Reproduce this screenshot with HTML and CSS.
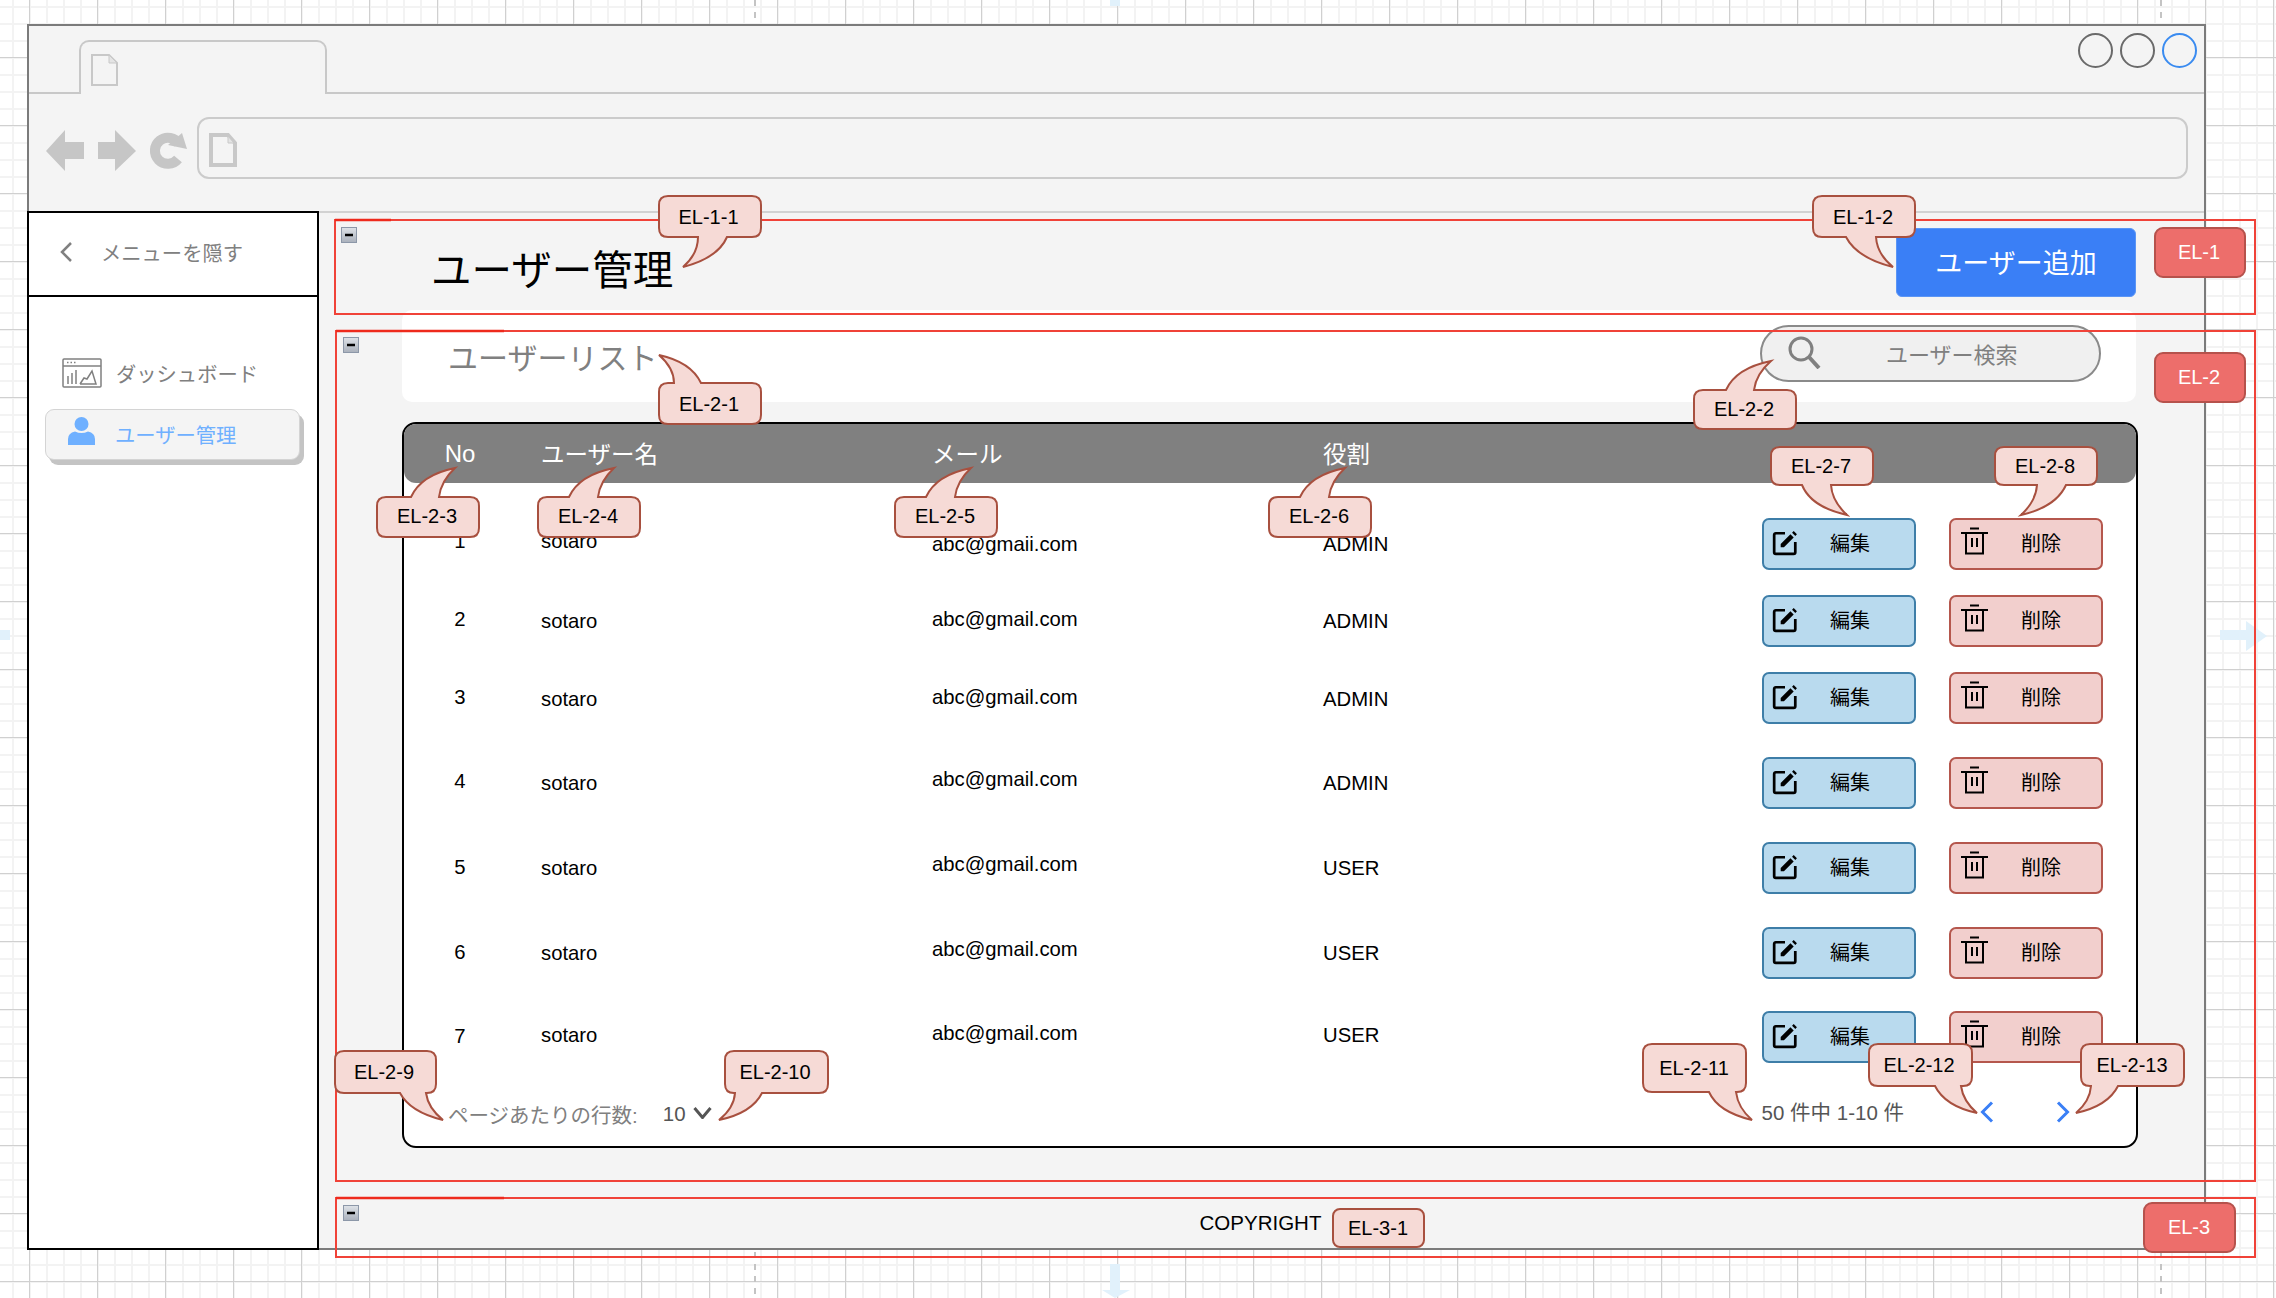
FILE: index.html
```html
<!DOCTYPE html>
<html lang="ja">
<head>
<meta charset="utf-8">
<title>ユーザー管理</title>
<link rel="stylesheet" href="styles.css">
</head>
<body>
<svg class="canvas-marks" viewBox="0 0 2276 1298" aria-hidden="true">
  <g class="dash"><path d="M755 0V22M2161 0V22M755 1252V1298M2161 1252V1298"/></g>
  <g class="guide">
    <path d="M2220 630H2246V621L2267 636L2246 651V640H2220Z"/>
    <path d="M0 630H10V640H0Z"/>
    <path d="M1110 1264H1120V1290H1130L1115 1298L1102 1290H1110Z"/>
    <path d="M1110 0H1120V6H1110Z"/>
  </g>
</svg>

<div class="window">
  <div class="tabstrip">
    <div class="tab">
      <svg class="doc-tab" viewBox="0 0 27 32"><path class="doc-line" d="M1 1H18L26 9V31H1Z"/><path class="doc-fold" d="M18 1V9H26Z"/></svg>
    </div>
    <div class="win-buttons">
      <span class="win-dot"></span><span class="win-dot"></span><span class="win-dot active"></span>
    </div>
  </div>
  <div class="toolbar">
    <svg class="nav-icons" viewBox="0 0 142 42">
      <polygon points="0,21 19,0 19,12 38,12 38,29 19,29 19,41"/>
      <polygon points="52,12 69,12 69,0 90,21 69,41 69,29 52,29"/>
      <path class="reload" d="M133 14A13 13 0 1 0 132 29"/>
      <polygon points="122,15 136,3 141,19"/>
    </svg>
    <div class="address">
      <svg class="doc-addr" viewBox="0 0 28 34"><path class="doc-line thick" d="M2 2H19L26 10V32H2Z"/><path class="doc-fold" d="M19 3V10H25Z"/></svg>
    </div>
  </div>
  <div class="app">
    <aside class="sidebar">
      <div class="side-head">
        <svg class="side-chevron" viewBox="0 0 14 22"><path d="M12 2L3 11L12 20"/></svg>
        <span>メニューを隠す</span>
      </div>
      <nav class="side-nav">
        <div class="side-item">
          <svg class="dash-icon" viewBox="0 0 40 30">
            <rect x="1" y="1" width="38" height="28" rx="1"/>
            <path d="M1 8H39"/>
            <path class="dots" d="M5 4.500H6.500M8.500 4.500H10M12 4.500H13.500"/>
            <path d="M6 26V18M10 26V15M14 26V12"/>
            <path d="M18 26L22 20L25 21L30 13L34 26H18"/>
          </svg>
          <span>ダッシュボード</span>
        </div>
        <div class="side-item current">
          <svg class="user-icon" viewBox="0 0 27 28"><circle cx="13.500" cy="7" r="7"/><path d="M0 28V22Q0 16 7 14.500Q13.500 17.500 20 14.500Q27 16 27 22V28Z"/></svg>
          <span>ユーザー管理</span>
        </div>
      </nav>
    </aside>

    <main class="main">
      <header class="page-head">
        <h1 class="page-title">ユーザー管理</h1>
        <button class="add-btn">ユーザー追加</button>
      </header>

      <section class="list-head">
        <h2 class="list-title">ユーザーリスト</h2>
        <div class="search">
          <svg class="search-icon" viewBox="0 0 34 33"><circle cx="14" cy="13" r="11"/><path d="M22 21L32 32"/></svg>
          <span>ユーザー検索</span>
        </div>
      </section>

      <section class="card">
        <div class="thead">
          <span class="col-no">No</span><span>ユーザー名</span><span>メール</span><span>役割</span>
        </div>
        <div class="rows">
          <div class="row">
            <span class="col-no up3">1</span><span class="up3">sotaro</span><span>abc@gmaii.com</span><span>ADMIN</span>
            <button class="btn edit"><svg class="i-edit" viewBox="0 0 24 24"><path d="M12 3H3.500A1.500 1.500 0 0 0 2 4.500V20.500A1.500 1.500 0 0 0 3.500 22H20A1.500 1.500 0 0 0 21.500 20.500V11"/><path class="fill" d="M8 13L17 4L20 7L11 16H8Z"/><path class="fill" d="M18.500 2.500L20 1L23 4L21.500 5.500Z"/></svg><span>編集</span></button>
            <button class="btn del"><svg class="i-del" viewBox="0 0 27 28"><path d="M0 6H27M9 1.500H18M5 6V26.500H22V6M11 11V20M16 11V20"/></svg><span>削除</span></button>
          </div>
          <div class="row">
            <span class="col-no up2">2</span><span>sotaro</span><span class="up2">abc@gmail.com</span><span>ADMIN</span>
            <button class="btn edit"><svg class="i-edit" viewBox="0 0 24 24"><path d="M12 3H3.500A1.500 1.500 0 0 0 2 4.500V20.500A1.500 1.500 0 0 0 3.500 22H20A1.500 1.500 0 0 0 21.500 20.500V11"/><path class="fill" d="M8 13L17 4L20 7L11 16H8Z"/><path class="fill" d="M18.500 2.500L20 1L23 4L21.500 5.500Z"/></svg><span>編集</span></button>
            <button class="btn del"><svg class="i-del" viewBox="0 0 27 28"><path d="M0 6H27M9 1.500H18M5 6V26.500H22V6M11 11V20M16 11V20"/></svg><span>削除</span></button>
          </div>
          <div class="row wide">
            <span class="col-no up1">3</span><span class="dn1">sotaro</span><span class="up1">abc@gmail.com</span><span class="dn1">ADMIN</span>
            <button class="btn edit"><svg class="i-edit" viewBox="0 0 24 24"><path d="M12 3H3.500A1.500 1.500 0 0 0 2 4.500V20.500A1.500 1.500 0 0 0 3.500 22H20A1.500 1.500 0 0 0 21.500 20.500V11"/><path class="fill" d="M8 13L17 4L20 7L11 16H8Z"/><path class="fill" d="M18.500 2.500L20 1L23 4L21.500 5.500Z"/></svg><span>編集</span></button>
            <button class="btn del"><svg class="i-del" viewBox="0 0 27 28"><path d="M0 6H27M9 1.500H18M5 6V26.500H22V6M11 11V20M16 11V20"/></svg><span>削除</span></button>
          </div>
          <div class="row wide">
            <span class="col-no up2">4</span><span>sotaro</span><span class="up4">abc@gmail.com</span><span>ADMIN</span>
            <button class="btn edit"><svg class="i-edit" viewBox="0 0 24 24"><path d="M12 3H3.500A1.500 1.500 0 0 0 2 4.500V20.500A1.500 1.500 0 0 0 3.500 22H20A1.500 1.500 0 0 0 21.500 20.500V11"/><path class="fill" d="M8 13L17 4L20 7L11 16H8Z"/><path class="fill" d="M18.500 2.500L20 1L23 4L21.500 5.500Z"/></svg><span>編集</span></button>
            <button class="btn del"><svg class="i-del" viewBox="0 0 27 28"><path d="M0 6H27M9 1.500H18M5 6V26.500H22V6M11 11V20M16 11V20"/></svg><span>削除</span></button>
          </div>
          <div class="row wide">
            <span class="col-no up1">5</span><span>sotaro</span><span class="up4">abc@gmail.com</span><span>USER</span>
            <button class="btn edit"><svg class="i-edit" viewBox="0 0 24 24"><path d="M12 3H3.500A1.500 1.500 0 0 0 2 4.500V20.500A1.500 1.500 0 0 0 3.500 22H20A1.500 1.500 0 0 0 21.500 20.500V11"/><path class="fill" d="M8 13L17 4L20 7L11 16H8Z"/><path class="fill" d="M18.500 2.500L20 1L23 4L21.500 5.500Z"/></svg><span>編集</span></button>
            <button class="btn del"><svg class="i-del" viewBox="0 0 27 28"><path d="M0 6H27M9 1.500H18M5 6V26.500H22V6M11 11V20M16 11V20"/></svg><span>削除</span></button>
          </div>
          <div class="row tail">
            <span class="col-no up1">6</span><span>sotaro</span><span class="up4">abc@gmail.com</span><span>USER</span>
            <button class="btn edit"><svg class="i-edit" viewBox="0 0 24 24"><path d="M12 3H3.500A1.500 1.500 0 0 0 2 4.500V20.500A1.500 1.500 0 0 0 3.500 22H20A1.500 1.500 0 0 0 21.500 20.500V11"/><path class="fill" d="M8 13L17 4L20 7L11 16H8Z"/><path class="fill" d="M18.500 2.500L20 1L23 4L21.500 5.500Z"/></svg><span>編集</span></button>
            <button class="btn del"><svg class="i-del" viewBox="0 0 27 28"><path d="M0 6H27M9 1.500H18M5 6V26.500H22V6M11 11V20M16 11V20"/></svg><span>削除</span></button>
          </div>
          <div class="row tail">
            <span class="col-no up1">7</span><span class="up2">sotaro</span><span class="up4">abc@gmail.com</span><span class="up2">USER</span>
            <button class="btn edit"><svg class="i-edit" viewBox="0 0 24 24"><path d="M12 3H3.500A1.500 1.500 0 0 0 2 4.500V20.500A1.500 1.500 0 0 0 3.500 22H20A1.500 1.500 0 0 0 21.500 20.500V11"/><path class="fill" d="M8 13L17 4L20 7L11 16H8Z"/><path class="fill" d="M18.500 2.500L20 1L23 4L21.500 5.500Z"/></svg><span>編集</span></button>
            <button class="btn del"><svg class="i-del" viewBox="0 0 27 28"><path d="M0 6H27M9 1.500H18M5 6V26.500H22V6M11 11V20M16 11V20"/></svg><span>削除</span></button>
          </div>
        </div>
        <div class="pager">
          <span class="per-page">ページあたりの行数:</span>
          <span class="per-value">10</span>
          <svg class="per-chevron" viewBox="0 0 19 12"><path d="M1.500 1L9.500 10.500L17.500 1"/></svg>
          <span class="range">50 件中 1-10 件</span>
          <svg class="page-chevron first" viewBox="0 0 14 22"><path d="M12 1.500L2.500 11L12 20.500"/></svg>
          <svg class="page-chevron" viewBox="0 0 14 22"><path d="M2 1.500L11.500 11L2 20.500"/></svg>
        </div>
      </section>

      <footer class="page-foot">COPYRIGHT</footer>
    </main>
  </div>
</div>

<svg class="annotations" viewBox="0 0 2276 1298">
  <defs>
    <linearGradient id="minus-fill" x1="0" y1="0" x2="0" y2="1">
      <stop offset="0" stop-color="#dfe3e8"/><stop offset="1" stop-color="#a9b0bb"/>
    </linearGradient>
  </defs>
  <g class="zones">
    <rect x="335" y="220" width="1920" height="94"/>
    <rect x="336" y="331" width="1919" height="850"/>
    <rect x="336" y="1198" width="1919" height="59"/>
    <path d="M335 220H391M336 331H504M336 1198H504"/>
  </g>
  <g class="minus">
    <rect x="341.500" y="227.500" width="15" height="15"/><path d="M345 235H353"/>
    <rect x="343.500" y="337.500" width="15" height="15"/><path d="M347 345H355"/>
    <rect x="343.500" y="1205.500" width="15" height="15"/><path d="M347 1213H355"/>
  </g>
  <g class="zone-tag">
    <rect x="2155" y="228" width="90" height="49" rx="8"/><text x="2199" y="252">EL-1</text>
    <rect x="2155" y="353" width="90" height="49" rx="8"/><text x="2199" y="377">EL-2</text>
    <rect x="2144" y="1203" width="91" height="49" rx="8"/><text x="2189" y="1227">EL-3</text>
  </g>
  <g class="callout">
    <path d="M668 196H752Q761 196 761 205V228Q761 237 752 237H727Q718 258 683 267Q698 254 698 237H668Q659 237 659 228V205Q659 196 668 196Z"/><text x="708.500" y="217">EL-1-1</text>
    <path d="M1822 196H1906Q1915 196 1915 205V228Q1915 237 1906 237H1876Q1877 254 1893 267Q1857 258 1846 237H1822Q1813 237 1813 228V205Q1813 196 1822 196Z"/><text x="1863" y="217">EL-1-2</text>
    <path d="M668 383H674Q674 368 659 355Q691 362 701 383H752Q761 383 761 392V415Q761 424 752 424H668Q659 424 659 415V392Q659 383 668 383Z"/><text x="709" y="404">EL-2-1</text>
    <path d="M1703 390H1726Q1736 368 1771 361Q1756 374 1754 390H1787Q1796 390 1796 399V420Q1796 429 1787 429H1703Q1694 429 1694 420V399Q1694 390 1703 390Z"/><text x="1744" y="409">EL-2-2</text>
    <path d="M386 497H411Q421 475 455 468Q441 481 439 497H470Q479 497 479 506V528Q479 537 470 537H386Q377 537 377 528V506Q377 497 386 497Z"/><text x="427" y="516">EL-2-3</text>
    <path d="M547 497H569Q579 475 614 468Q600 481 598 497H631Q640 497 640 506V528Q640 537 631 537H547Q538 537 538 528V506Q538 497 547 497Z"/><text x="588" y="516">EL-2-4</text>
    <path d="M904 497H926Q936 475 971 468Q957 481 955 497H988Q997 497 997 506V528Q997 537 988 537H904Q895 537 895 528V506Q895 497 904 497Z"/><text x="945" y="516">EL-2-5</text>
    <path d="M1278 497H1300Q1310 475 1345 468Q1331 481 1329 497H1362Q1371 497 1371 506V528Q1371 537 1362 537H1278Q1269 537 1269 528V506Q1269 497 1278 497Z"/><text x="1319" y="516">EL-2-6</text>
    <path d="M1780 447H1864Q1873 447 1873 456V476Q1873 485 1864 485H1831Q1832 501 1847 515Q1811 507 1802 485H1780Q1771 485 1771 476V456Q1771 447 1780 447Z"/><text x="1821" y="466">EL-2-7</text>
    <path d="M2004 447H2088Q2097 447 2097 456V476Q2097 485 2088 485H2066Q2056 507 2021 515Q2036 501 2037 485H2004Q1995 485 1995 476V456Q1995 447 2004 447Z"/><text x="2045" y="466">EL-2-8</text>
    <path d="M344 1051H427Q436 1051 436 1060V1084Q436 1093 427 1093H426Q428 1108 443 1120Q410 1112 400 1093H344Q335 1093 335 1084V1060Q335 1051 344 1051Z"/><text x="384" y="1072">EL-2-9</text>
    <path d="M734 1051H819Q828 1051 828 1060V1084Q828 1093 819 1093H762Q752 1113 719 1120Q734 1108 735 1093H734Q725 1093 725 1084V1060Q725 1051 734 1051Z"/><text x="775" y="1072">EL-2-10</text>
    <path d="M1652 1044H1737Q1746 1044 1746 1053V1083Q1746 1092 1737 1092H1736Q1738 1108 1752 1120Q1718 1112 1709 1092H1652Q1643 1092 1643 1083V1053Q1643 1044 1652 1044Z"/><text x="1694" y="1068">EL-2-11</text>
    <path d="M1878 1044H1963Q1972 1044 1972 1053V1077Q1972 1086 1963 1086H1961Q1963 1101 1977 1113Q1945 1106 1935 1086H1878Q1869 1086 1869 1077V1053Q1869 1044 1878 1044Z"/><text x="1919" y="1065">EL-2-12</text>
    <path d="M2090 1044H2175Q2184 1044 2184 1053V1077Q2184 1086 2175 1086H2118Q2108 1106 2076 1113Q2090 1101 2091 1086H2090Q2081 1086 2081 1077V1053Q2081 1044 2090 1044Z"/><text x="2132" y="1065">EL-2-13</text>
    <rect x="1333" y="1209" width="91" height="38" rx="7"/><text x="1378" y="1228">EL-3-1</text>
  </g>
</svg>
</body>
</html>
```
FILE: styles.css
```css
* { box-sizing: border-box; }

html, body { margin: 0; padding: 0; }

body {
  position: relative;
  width: 2276px;
  height: 1298px;
  overflow: hidden;
  padding: 24px 0 0 27px;
  font-family: "Liberation Sans", "Noto Sans CJK JP", sans-serif;
  color: #000;
  background-color: #fff;
  background-image:
    linear-gradient(#d0d0d0 1.500px, transparent 1.500px),
    linear-gradient(90deg, #d0d0d0 1.500px, transparent 1.500px),
    linear-gradient(#f3f3f3 2px, transparent 2px),
    linear-gradient(90deg, #f3f3f3 2px, transparent 2px);
  background-size: 68px 68px, 68px 68px, 17px 17px, 17px 17px;
  background-position: 0 57px, 29px 0, 0 6px, 12px 0;
}

/* background guides of the drawing canvas */
.canvas-marks {
  position: absolute;
  left: 0;
  top: 0;
  width: 2276px;
  height: 1298px;
}
.dash path { fill: none; stroke: #c4c4c4; stroke-width: 2; stroke-dasharray: 6 6; }
.guide path { fill: #e1f1fb; }

/* browser window */
.window {
  position: relative;
  display: flex;
  flex-direction: column;
  width: 2179px;
  height: 1226px;
  border: 2px solid #7b7b7b;
  background: #f4f4f4;
}

.tabstrip {
  display: flex;
  justify-content: space-between;
  height: 68px;
  padding: 0 7px 0 50px;
  border-bottom: 2px solid #c8c8c8;
}
.tab {
  align-self: flex-end;
  width: 248px;
  height: 54px;
  margin-bottom: -2px;
  padding: 12px 0 0 10px;
  border: 2px solid #c8c8c8;
  border-bottom: 0;
  border-radius: 10px 10px 0 0;
  background: #f4f4f4;
}
.doc-tab { display: block; width: 27px; height: 32px; }
.doc-addr { display: block; width: 28px; height: 34px; }
.doc-line { fill: none; stroke: #c8c8c8; stroke-width: 2; }
.doc-line.thick { stroke-width: 4; }
.doc-fold { fill: #e4e4e4; stroke: #c8c8c8; stroke-width: 1; }

.win-buttons { display: flex; gap: 7px; margin-top: 7px; }
.win-dot {
  width: 35px;
  height: 35px;
  border: 2px solid #6a6a6a;
  border-radius: 50%;
}
.win-dot.active { border-color: #3a8bf0; }

.toolbar {
  display: flex;
  gap: 9px;
  height: 117px;
  padding: 23px 16px 0 17px;
}
.nav-icons { flex: none; width: 142px; height: 42px; margin-top: 13px; fill: #c6c6c6; }
.reload { fill: none; stroke: #c6c6c6; stroke-width: 10; }
.address {
  flex: 1;
  height: 62px;
  padding: 14px 0 0 10px;
  border: 2px solid #cbcbcb;
  border-radius: 12px;
}

.app {
  flex: 1;
  display: flex;
  min-height: 0;
}

/* sidebar */
.sidebar {
  flex: none;
  width: 292px;
  margin: 0 0 -2px -2px;
  border: 2px solid #000;
  background: #fff;
  color: #808080;
  font-size: 20.300px;
}
.side-head {
  display: flex;
  align-items: center;
  gap: 28px;
  height: 84px;
  padding: 0 0 4px 30px;
  border-bottom: 2px solid #000;
}
.side-chevron { width: 14px; height: 22px; fill: none; stroke: #808080; stroke-width: 2.500; }
.side-nav { padding: 61px 0 0 16px; }
.side-item {
  display: flex;
  align-items: center;
  gap: 14px;
  height: 30px;
  padding-left: 17px;
}
.dash-icon { width: 40px; height: 30px; fill: none; stroke: #808080; stroke-width: 1.500; }
.dash-icon .dots { stroke-width: 1.500; }
.side-item.current {
  gap: 20px;
  width: 255px;
  height: 51px;
  margin-top: 21px;
  padding: 0 0 2px 22px;
  border: 1px solid #d4d4d4;
  border-radius: 9px;
  background: #f4f4f4;
  color: #6fb0ff;
  box-shadow: 4px 5px 0 #c4c4c4;
}
.user-icon { width: 27px; height: 28px; fill: #6fb0ff; margin-top: -6px; }

/* main area */
.main {
  flex: 1;
  display: flex;
  flex-direction: column;
  min-width: 0;
  padding: 0 66px 0 83px;
  border-top: 2px solid #d2d2d2;
}
.page-head {
  display: flex;
  justify-content: space-between;
  margin-top: 15px;
  height: 69px;
}
.page-title {
  margin: 0;
  padding: 12px 0 0 29px;
  font-size: 40.500px;
  font-weight: 400;
  line-height: 62px;
}
.add-btn {
  width: 240px;
  margin-right: 2px;
  padding: 0 0 2px;
  border: 1px solid #5b95f5;
  border-radius: 6px;
  background: #3a7ff6;
  color: #fff;
  font: inherit;
  font-size: 27px;
}

.list-head {
  display: flex;
  justify-content: space-between;
  align-items: center;
  height: 92px;
  margin: 13px 2px 0 0;
  padding: 0 35px 0 46px;
  border-radius: 10px;
  background: #fff;
}
.list-title {
  margin: 0;
  color: #808080;
  font-size: 30px;
  font-weight: 400;
}
.search {
  display: flex;
  align-items: center;
  gap: 65px;
  width: 341px;
  height: 57px;
  margin-top: -5px;
  padding: 0 0 2px 25px;
  border: 2px solid #8a8a8a;
  border-radius: 29px;
  background: #f0f0f0;
  color: #808080;
  font-size: 22px;
}
.search-icon { width: 34px; height: 33px; fill: none; stroke: #808080; stroke-width: 3; }
.search-icon path { stroke-width: 4; }

.card {
  height: 726px;
  margin-top: 20px;
  border: 2px solid #000;
  border-radius: 14px;
  background: #fff;
  font-size: 20.300px;
}
.thead, .row {
  display: grid;
  grid-template-columns: 137px 391px 391px 439px 187px 154px;
}
.thead {
  align-items: center;
  height: 59px;
  padding-bottom: 1px;
  border-radius: 12px;
  background: #808080;
  color: #fff;
  font-size: 23.500px;
}
.col-no { width: 112px; text-align: center; }
.thead .col-no { padding-top: 1px; font-size: 24px; }
.rows { margin-top: 35px; }
.row {
  align-items: start;
  height: 77px;
  line-height: 52px;
}
.row.wide { height: 85px; }
.row.tail { height: 84px; }
.up1 { margin-top: -1px; }
.up2 { margin-top: -2px; }
.up3 { margin-top: -3px; }
.up4 { margin-top: -4px; }
.dn1 { margin-top: 1px; }

.btn {
  display: flex;
  align-items: center;
  width: 154px;
  height: 52px;
  padding: 0;
  border: 2px solid;
  border-radius: 7px;
  color: #000;
  font: inherit;
  font-size: 20px;
}
.btn.edit { gap: 32px; padding-left: 8px; background: #b9daee; border-color: #3e7ea8; }
.btn.del { gap: 33px; padding-left: 10px; background: #f2cfcd; border-color: #b5574d; }
.i-edit { width: 26px; height: 26px; margin-top: -3px; fill: none; stroke: #000; stroke-width: 2.500; }
.i-edit .fill { fill: #000; stroke: none; }
.i-del { width: 27px; height: 28px; margin-top: -6px; fill: none; stroke: #000; stroke-width: 2; }

.pager {
  display: flex;
  align-items: center;
  height: 38px;
  padding: 0 66px 0 44px;
  color: #555;
  font-size: 20.500px;
}
.per-page { color: #808080; }
.per-value { margin-left: 25px; }
.per-chevron { width: 19px; height: 12px; margin: -2px 0 0 7px; fill: none; stroke: #555; stroke-width: 3; }
.range { margin: -6px 0 0 auto; }
.page-chevron { width: 14px; height: 22px; margin: -4px 0 0 62px; fill: none; stroke: #3a7ff6; stroke-width: 3; }
.page-chevron.first { margin-left: 76px; }

.page-foot {
  margin: auto -64px 0 -83px;
  height: 50px;
  font-size: 20.500px;
  line-height: 50px;
  text-align: center;
}

/* annotation layer drawn over the wireframe */
.annotations {
  position: absolute;
  left: 0;
  top: 0;
  width: 2276px;
  height: 1298px;
}
.annotations text {
  font-family: "Liberation Sans", sans-serif;
  font-size: 20px;
  text-anchor: middle;
  dominant-baseline: central;
}
.zones rect { fill: none; stroke: #f04238; stroke-width: 2; }
.zones path { fill: none; stroke: #ee2a1c; stroke-width: 2.500; }
.minus rect { fill: url(#minus-fill); stroke: #8c97a8; stroke-width: 1; }
.minus path { fill: none; stroke: #000; stroke-width: 2.500; }
.zone-tag rect { fill: #ed6e6b; stroke: #b6524c; stroke-width: 2; }
.zone-tag text { fill: #fff; }
.callout path, .callout rect { fill: #f6dad6; stroke: #a8503f; stroke-width: 2; }
.callout text { fill: #000; }
```
